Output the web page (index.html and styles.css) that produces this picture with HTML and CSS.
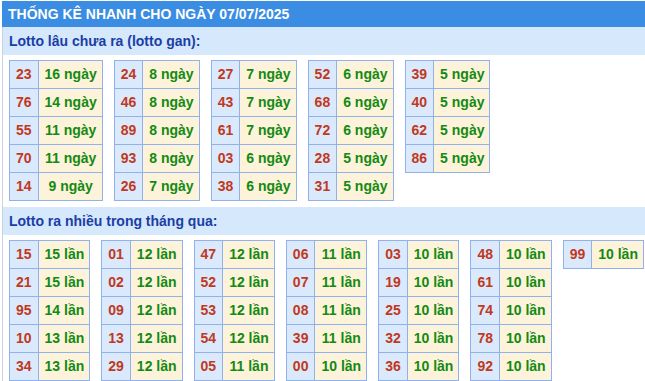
FILE: index.html
```html
<!DOCTYPE html>
<html lang="vi">
<head>
<meta charset="utf-8">
<link rel="stylesheet" href="styles.css">
</head>
<body>
<div class="wrap">
  <div class="hdr">THỐNG KÊ NHANH CHO NGÀY 07/07/2025</div>
  <div class="box">
    <div class="sec">Lotto lâu chưa ra (lotto gan):</div>
    <div class="tables">
      <table><tr><td class="n">23</td><td class="v">16 ngày</td></tr><tr><td class="n">76</td><td class="v">14 ngày</td></tr><tr><td class="n">55</td><td class="v">11 ngày</td></tr><tr><td class="n">70</td><td class="v">11 ngày</td></tr><tr><td class="n">14</td><td class="v">9 ngày</td></tr></table>
      <table><tr><td class="n">24</td><td class="v">8 ngày</td></tr><tr><td class="n">46</td><td class="v">8 ngày</td></tr><tr><td class="n">89</td><td class="v">8 ngày</td></tr><tr><td class="n">93</td><td class="v">8 ngày</td></tr><tr><td class="n">26</td><td class="v">7 ngày</td></tr></table>
      <table><tr><td class="n">27</td><td class="v">7 ngày</td></tr><tr><td class="n">43</td><td class="v">7 ngày</td></tr><tr><td class="n">61</td><td class="v">7 ngày</td></tr><tr><td class="n">03</td><td class="v">6 ngày</td></tr><tr><td class="n">38</td><td class="v">6 ngày</td></tr></table>
      <table><tr><td class="n">52</td><td class="v">6 ngày</td></tr><tr><td class="n">68</td><td class="v">6 ngày</td></tr><tr><td class="n">72</td><td class="v">6 ngày</td></tr><tr><td class="n">28</td><td class="v">5 ngày</td></tr><tr><td class="n">31</td><td class="v">5 ngày</td></tr></table>
      <table><tr><td class="n">39</td><td class="v">5 ngày</td></tr><tr><td class="n">40</td><td class="v">5 ngày</td></tr><tr><td class="n">62</td><td class="v">5 ngày</td></tr><tr><td class="n">86</td><td class="v">5 ngày</td></tr></table>
    </div>
    <div class="sec">Lotto ra nhiều trong tháng qua:</div>
    <div class="tables">
      <table><tr><td class="n">15</td><td class="v">15 lần</td></tr><tr><td class="n">21</td><td class="v">15 lần</td></tr><tr><td class="n">95</td><td class="v">14 lần</td></tr><tr><td class="n">10</td><td class="v">13 lần</td></tr><tr><td class="n">34</td><td class="v">13 lần</td></tr></table>
      <table><tr><td class="n">01</td><td class="v">12 lần</td></tr><tr><td class="n">02</td><td class="v">12 lần</td></tr><tr><td class="n">09</td><td class="v">12 lần</td></tr><tr><td class="n">13</td><td class="v">12 lần</td></tr><tr><td class="n">29</td><td class="v">12 lần</td></tr></table>
      <table><tr><td class="n">47</td><td class="v">12 lần</td></tr><tr><td class="n">52</td><td class="v">12 lần</td></tr><tr><td class="n">53</td><td class="v">12 lần</td></tr><tr><td class="n">54</td><td class="v">12 lần</td></tr><tr><td class="n">05</td><td class="v">11 lần</td></tr></table>
      <table><tr><td class="n">06</td><td class="v">11 lần</td></tr><tr><td class="n">07</td><td class="v">11 lần</td></tr><tr><td class="n">08</td><td class="v">11 lần</td></tr><tr><td class="n">39</td><td class="v">11 lần</td></tr><tr><td class="n">00</td><td class="v">10 lần</td></tr></table>
      <table><tr><td class="n">03</td><td class="v">10 lần</td></tr><tr><td class="n">19</td><td class="v">10 lần</td></tr><tr><td class="n">25</td><td class="v">10 lần</td></tr><tr><td class="n">32</td><td class="v">10 lần</td></tr><tr><td class="n">36</td><td class="v">10 lần</td></tr></table>
      <table><tr><td class="n">48</td><td class="v">10 lần</td></tr><tr><td class="n">61</td><td class="v">10 lần</td></tr><tr><td class="n">74</td><td class="v">10 lần</td></tr><tr><td class="n">78</td><td class="v">10 lần</td></tr><tr><td class="n">92</td><td class="v">10 lần</td></tr></table>
      <table><tr><td class="n">99</td><td class="v">10 lần</td></tr></table>
    </div>
  </div>
</div>
</body>
</html>
```
FILE: styles.css
```css
html, body {
  margin: 0;
  padding: 0;
  background: #ffffff;
}
body {
  font-family: "Liberation Sans", Arial, sans-serif;
  font-size: 14px;
  font-weight: bold;
}
.wrap {
  margin-top: 1px;
  margin-left: 2px;
}
.hdr {
  height: 26px;
  line-height: 26px;
  padding-left: 6px;
  background: #3a8de2;
  color: #ffffff;
  white-space: nowrap;
}
.box {
  border-left: 1px solid #c9d3de;
}
.sec {
  height: 28px;
  line-height: 28px;
  padding-left: 6px;
  background: #d6e8fb;
  color: #1a3ea6;
  white-space: nowrap;
}
.tables {
  display: flex;
  flex-wrap: nowrap;
  align-items: flex-start;
  gap: 11px;
  padding: 5px 0 6px 6px;
}
table {
  border-collapse: collapse;
  flex: none;
}
td {
  border: 1px solid #8fb1ec;
  padding: 5px 6px;
  line-height: 17px;
  text-align: center;
  white-space: nowrap;
}
td.n {
  background: #dbe9fc;
  color: #c0391c;
}
td.v {
  padding-right: 5px;
  background: #fdf3da;
  color: #138a12;
}
```
